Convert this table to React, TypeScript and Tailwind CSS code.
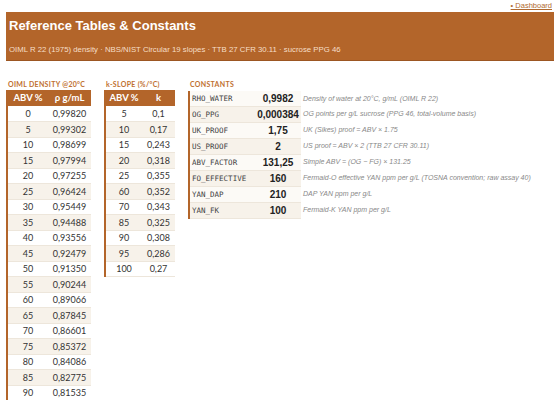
import React from 'react'

const density: [string, string][] = [
  ['0', '0,99820'], ['5', '0,99302'], ['10', '0,98699'], ['15', '0,97994'],
  ['20', '0,97255'], ['25', '0,96424'], ['30', '0,95449'], ['35', '0,94488'],
  ['40', '0,93556'], ['45', '0,92479'], ['50', '0,91350'], ['55', '0,90244'],
  ['60', '0,89066'], ['65', '0,87845'], ['70', '0,86601'], ['75', '0,85372'],
  ['80', '0,84086'], ['85', '0,82775'], ['90', '0,81535'],
]

const slopes: [string, string][] = [
  ['5', '0,1'], ['10', '0,17'], ['15', '0,243'], ['20', '0,318'], ['25', '0,355'],
  ['60', '0,352'], ['70', '0,343'], ['85', '0,325'], ['90', '0,308'], ['95', '0,286'],
  ['100', '0,27'],
]

const constants: [string, string, string][] = [
  ['RHO_WATER', '0,9982', 'Density of water at 20°C, g/mL (OIML R 22)'],
  ['OG_PPG', '0,000384', 'OG points per g/L sucrose (PPG 46, total-volume basis)'],
  ['UK_PROOF', '1,75', 'UK (Sikes) proof = ABV × 1.75'],
  ['US_PROOF', '2', 'US proof = ABV × 2 (TTB 27 CFR 30.11)'],
  ['ABV_FACTOR', '131,25', 'Simple ABV = (OG − FG) × 131.25'],
  ['FO_EFFECTIVE', '160', 'Fermaid-O effective YAN ppm per g/L (TOSNA convention; raw assay 40)'],
  ['YAN_DAP', '210', 'DAP YAN ppm per g/L'],
  ['YAN_FK', '100', 'Fermaid-K YAN ppm per g/L'],
]

const Heading: React.FC<{ children: React.ReactNode }> = ({ children }) => (
  <div className="h-[9px] mb-[1px] pl-[2px] font-['Lato',sans-serif] text-[7px] leading-[9px] font-bold tracking-[0.3px] text-[#c0702f] whitespace-nowrap">
    {children}
  </div>
)

const NumTable: React.FC<{ title: string; head: [string, string]; rows: [string, string][]; cols: [string, string] }> = ({ title, head, rows, cols }) => (
  <div>
    <Heading>{title}</Heading>
    <table className="border-collapse border-l-2 border-[#b3652a] font-['Lato',sans-serif] text-[9px] text-[#333]">
      <thead>
        <tr className="h-[16px] bg-[#b3652a] text-white font-bold text-[9.5px]">
          <th className={`${cols[0]} font-bold`}>{head[0]}</th>
          <th className={`${cols[1]} font-bold`}>{head[1]}</th>
        </tr>
      </thead>
      <tbody>
        {rows.map(([a, b], i) => (
          <tr key={a} className={`h-[15.5px] border-b border-[#ede6db] ${i % 2 ? 'bg-[#f7f2ea]' : 'bg-white'}`}>
            <td className="text-center">{a}</td>
            <td className="text-center">{b}</td>
          </tr>
        ))}
      </tbody>
    </table>
  </div>
)

export default function App() {
  return (
    <div className="w-[560px] h-[400px] overflow-hidden bg-white px-[6px] font-['Liberation_Sans',Arial,sans-serif]">
      <div className="h-[12px] flex justify-end items-start pt-[1px] pr-[2px]">
        <a className="text-[7.5px] leading-[9px] text-[#b06a30] underline">• Dashboard</a>
      </div>
      <div className="h-[49px] bg-[#b3652a] border-b border-[#9c5622] px-[3px] pt-[6px]">
        <h1 className="text-[13px] leading-[16px] font-bold text-white">Reference Tables &amp; Constants</h1>
        <p className="mt-[11px] text-[7.8px] leading-[10px] text-[#f6dfc8]">
          OIML R 22 (1975) density · NBS/NIST Circular 19 slopes · TTB 27 CFR 30.11 · sucrose PPG 46
        </p>
      </div>
      <div className="mt-[19px] flex items-start gap-[13px]">
        <NumTable title="OIML DENSITY @20°C" head={['ABV %', 'ρ g/mL']} rows={density} cols={['w-[41px]', 'w-[43px]']} />
        <NumTable title="k-SLOPE (%/°C)" head={['ABV %', 'k']} rows={slopes} cols={['w-[37px]', 'w-[33px]']} />
        <div>
          <Heading>CONSTANTS</Heading>
          <table className="mt-[2px] border-collapse border-l-2 border-[#b3652a]">
            <tbody>
              {constants.map(([n, v, d], i) => (
                <tr key={n} className="h-[15.6px]">
                  <td className={`w-[66px] pl-[2px] border-b border-[#ede6db] font-['DejaVu_Sans_Mono',monospace] text-[7.5px] text-[#444] ${i % 2 ? 'bg-[#f7f2ea]' : 'bg-[#fcfaf6]'}`}>{n}</td>
                  <td className={`w-[46px] border-b border-[#ede6db] text-center text-[10px] font-bold text-[#222] ${i % 2 ? 'bg-[#f7f2ea]' : 'bg-[#fcfaf6]'}`}>{v}</td>
                  <td className="pl-[2px] text-[7px] italic text-[#888] whitespace-nowrap">{d}</td>
                </tr>
              ))}
            </tbody>
          </table>
        </div>
      </div>
    </div>
  )
}
